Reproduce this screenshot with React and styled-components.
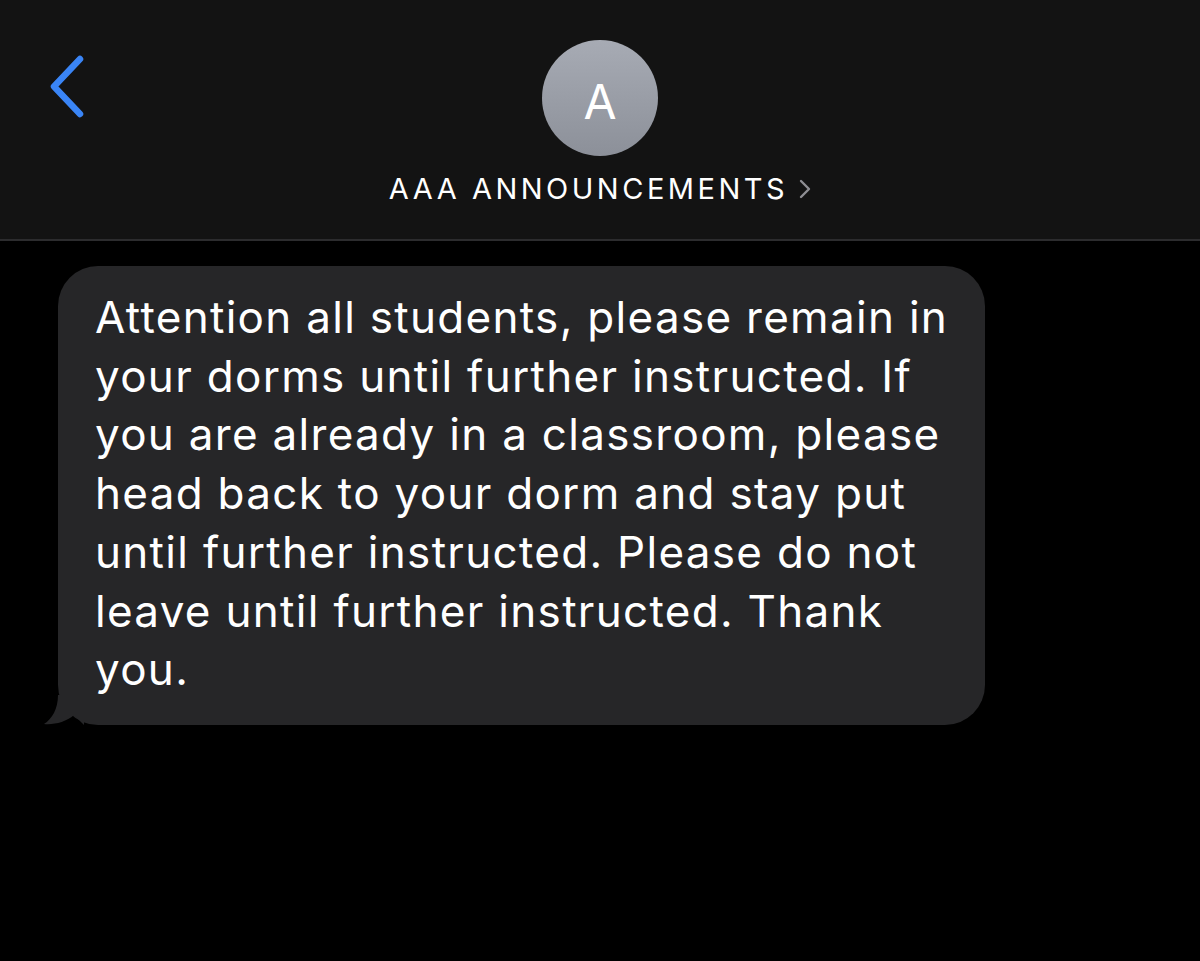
import React from 'react'
import styled, { createGlobalStyle } from 'styled-components'

const GlobalStyle = createGlobalStyle`
  html, body {
    margin: 0;
    padding: 0;
    background: #000;
  }
  body {
    font-family: Inter, 'Liberation Sans', sans-serif;
    -webkit-font-smoothing: antialiased;
  }
`

const Screen = styled.div`
  width: 1200px;
  height: 961px;
  background: #000;
  overflow: hidden;
`

const Header = styled.header`
  position: relative;
  height: 241px;
  background: #131313;
  border-bottom: 2px solid #2c2c2e;
  display: flex;
  flex-direction: column;
  align-items: center;
  padding-top: 40px;
  box-sizing: border-box;
`

const Back = styled.button`
  position: absolute;
  left: 44px;
  top: 52px;
  background: none;
  border: none;
  padding: 0;
  cursor: pointer;
`

const Avatar = styled.div`
  width: 116px;
  height: 116px;
  border-radius: 50%;
  background: linear-gradient(180deg, #a7abb4 0%, #8c9099 100%);
  color: #fff;
  display: flex;
  align-items: center;
  justify-content: center;
  font-size: 48px;
  font-weight: 400;
  padding-top: 6px;
  box-sizing: border-box;
`

const Title = styled.div`
  margin-top: 15px;
  display: flex;
  align-items: center;
  gap: 11px;
  color: #fff;
  font-size: 29px;
  letter-spacing: 3.5px;
`

const Thread = styled.main`
  padding: 25px 0 0 45px;
`

const Bubble = styled.div`
  position: relative;
  margin-left: 13px;
  width: 927px;
  box-sizing: border-box;
  background: #262628;
  border-radius: 40px;
  padding: 22px 20px 26px 37px;
  color: #fff;
  font-size: 44px;
  letter-spacing: 1.3px;
  line-height: 58.7px;
  white-space: nowrap;
`

const Tail = styled.svg`
  position: absolute;
  left: -14px;
  bottom: 0;
`

const lines = [
  'Attention all students, please remain in',
  'your dorms until further instructed. If',
  'you are already in a classroom, please',
  'head back to your dorm and stay put',
  'until further instructed. Please do not',
  'leave until further instructed. Thank',
  'you.',
]

const App = () => {
  return (
    <>
      <GlobalStyle />
      <Screen>
        <Header>
          <Back aria-label='Back'>
            <svg width='44' height='70' viewBox='0 0 44 70'>
              <path
                d='M36 7 L10 34.5 L36 62'
                fill='none'
                stroke='#3a85f6'
                strokeWidth='6.5'
                strokeLinecap='round'
                strokeLinejoin='round'
              />
            </svg>
          </Back>
          <Avatar>A</Avatar>
          <Title>
            AAA ANNOUNCEMENTS
            <svg width='12' height='20' viewBox='0 0 12 20'>
              <path
                d='M2 2 L10 10 L2 18'
                fill='none'
                stroke='#8e8e93'
                strokeWidth='2.4'
                strokeLinecap='round'
                strokeLinejoin='round'
              />
            </svg>
          </Title>
        </Header>
        <Thread>
          <Bubble>
            {lines.map((l, i) => (
              <div key={i}>{l}</div>
            ))}
            <Tail width='40' height='30' viewBox='0 0 40 30'>
              <path d='M14 0 C14 14 8 24 0 29 C10 30 22 27 30 20 L40 30 L40 0 Z' fill='#262628' />
            </Tail>
          </Bubble>
        </Thread>
      </Screen>
    </>
  )
}

export default App
